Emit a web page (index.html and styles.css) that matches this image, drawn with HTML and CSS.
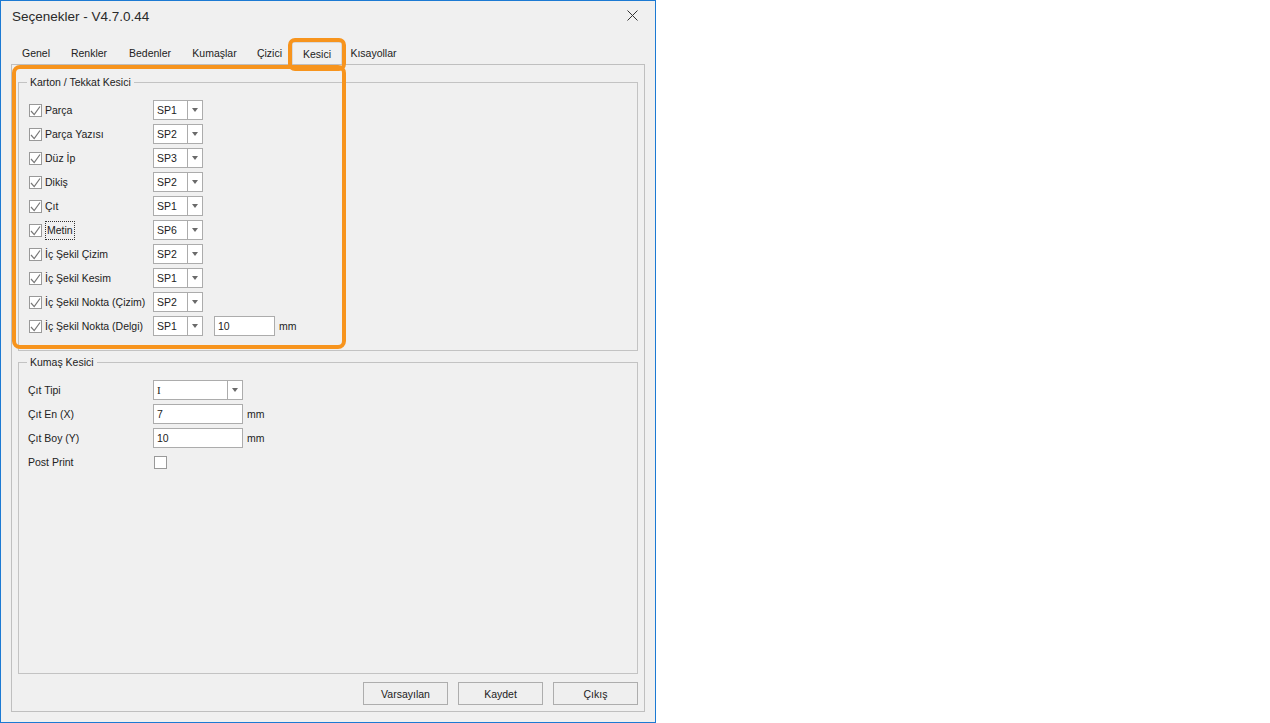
FILE: index.html
```html
<!DOCTYPE html>
<html lang="tr">
<head>
  <meta charset="UTF-8">
  <title>Seçenekler</title>
  <link rel="stylesheet" href="styles.css">
</head>
<body>

<div class="window">
  <div class="titlebar">
    <span class="title">Seçenekler - V4.7.0.44</span>
    <svg class="close" width="11" height="11" viewBox="0 0 11 11"><path d="M0.5 0.5L10.5 10.5M10.5 0.5L0.5 10.5" stroke="#333" stroke-width="1"/></svg>
  </div>

  <div class="tabs">
    <div class="tab tab-genel">Genel</div>
    <div class="tab tab-renkler">Renkler</div>
    <div class="tab tab-bedenler">Bedenler</div>
    <div class="tab tab-kumaslar">Kumaşlar</div>
    <div class="tab tab-cizici">Çizici</div>
    <div class="tab tab-kesici active">Kesici</div>
    <div class="tab tab-kisayollar">Kısayollar</div>
  </div>

  <div class="panel">
    <!-- Karton / Tekkat -->
    <div class="group group-karton">
      <div class="legend">Karton / Tekkat Kesici</div>
      <div class="rows rows-karton">
        <div class="row">
          <span class="cb"><svg viewBox="0 0 11 11"><path d="M1 6L4.2 9.6L10 1.5"/></svg></span>
          <span class="lbl">Parça</span>
          <div class="combo"><span class="val">SP1</span><span class="arrow"></span></div>
        </div>
        <div class="row">
          <span class="cb"><svg viewBox="0 0 11 11"><path d="M1 6L4.2 9.6L10 1.5"/></svg></span>
          <span class="lbl">Parça Yazısı</span>
          <div class="combo"><span class="val">SP2</span><span class="arrow"></span></div>
        </div>
        <div class="row">
          <span class="cb"><svg viewBox="0 0 11 11"><path d="M1 6L4.2 9.6L10 1.5"/></svg></span>
          <span class="lbl">Düz İp</span>
          <div class="combo"><span class="val">SP3</span><span class="arrow"></span></div>
        </div>
        <div class="row">
          <span class="cb"><svg viewBox="0 0 11 11"><path d="M1 6L4.2 9.6L10 1.5"/></svg></span>
          <span class="lbl">Dikiş</span>
          <div class="combo"><span class="val">SP2</span><span class="arrow"></span></div>
        </div>
        <div class="row">
          <span class="cb"><svg viewBox="0 0 11 11"><path d="M1 6L4.2 9.6L10 1.5"/></svg></span>
          <span class="lbl">Çıt</span>
          <div class="combo"><span class="val">SP1</span><span class="arrow"></span></div>
        </div>
        <div class="row">
          <span class="cb"><svg viewBox="0 0 11 11"><path d="M1 6L4.2 9.6L10 1.5"/></svg></span>
          <span class="lbl"><span class="focus">Metin</span></span>
          <div class="combo"><span class="val">SP6</span><span class="arrow"></span></div>
        </div>
        <div class="row">
          <span class="cb"><svg viewBox="0 0 11 11"><path d="M1 6L4.2 9.6L10 1.5"/></svg></span>
          <span class="lbl">İç Şekil Çizim</span>
          <div class="combo"><span class="val">SP2</span><span class="arrow"></span></div>
        </div>
        <div class="row">
          <span class="cb"><svg viewBox="0 0 11 11"><path d="M1 6L4.2 9.6L10 1.5"/></svg></span>
          <span class="lbl">İç Şekil Kesim</span>
          <div class="combo"><span class="val">SP1</span><span class="arrow"></span></div>
        </div>
        <div class="row">
          <span class="cb"><svg viewBox="0 0 11 11"><path d="M1 6L4.2 9.6L10 1.5"/></svg></span>
          <span class="lbl">İç Şekil Nokta (Çizim)</span>
          <div class="combo"><span class="val">SP2</span><span class="arrow"></span></div>
        </div>
        <div class="row">
          <span class="cb"><svg viewBox="0 0 11 11"><path d="M1 6L4.2 9.6L10 1.5"/></svg></span>
          <span class="lbl">İç Şekil Nokta (Delgi)</span>
          <div class="combo"><span class="val">SP1</span><span class="arrow"></span></div>
          <div class="field field-short">10</div>
          <span class="unit">mm</span>
        </div>
      </div>
    </div>

    <!-- Kumaş -->
    <div class="group group-kumas">
      <div class="legend">Kumaş Kesici</div>
      <div class="rows rows-kumas">
        <div class="row">
          <span class="lbl2">Çıt Tipi</span>
          <div class="combo combo-wide"><span class="val val-serif">I</span><span class="arrow"></span></div>
        </div>
        <div class="row">
          <span class="lbl2">Çıt En (X)</span>
          <div class="field field-wide">7</div>
          <span class="unit">mm</span>
        </div>
        <div class="row">
          <span class="lbl2">Çıt Boy (Y)</span>
          <div class="field field-wide">10</div>
          <span class="unit">mm</span>
        </div>
        <div class="row">
          <span class="lbl2">Post Print</span>
          <span class="cb cb-empty"></span>
        </div>
      </div>
    </div>

    <div class="buttons">
      <button class="btn">Varsayılan</button>
      <button class="btn">Kaydet</button>
      <button class="btn">Çıkış</button>
    </div>
  </div>

  <!-- orange highlight drawn over the dialog -->
  <svg class="highlight" width="656" height="723" viewBox="0 0 656 723">
    <rect x="290" y="40" width="54" height="29" rx="5" />
    <rect x="14" y="67" width="330" height="280" rx="6" />
  </svg>
</div>

</body>
</html>
```

FILE: styles.css
```css
* {
  box-sizing: border-box;
}

body {
  margin: 0;
  background: #fff;
  font-family: "Liberation Sans", Arial, sans-serif;
  font-size: 10.5px;
  color: #222;
}

.window {
  position: relative;
  width: 656px;
  height: 723px;
  border: 1px solid #1c7ad3;
  background: #f0f0f0;
}

.titlebar {
  height: 41px;
  display: flex;
  justify-content: space-between;
  align-items: flex-start;
  padding: 6px 17px 0 11px;
}

.title {
  font-size: 13.5px;
  line-height: 20px;
  color: #2a2a2a;
}

.close {
  margin-top: 3px;
}

.tabs {
  display: flex;
  height: 22px;
  padding-left: 11px;
}

.tab {
  padding-top: 1px;
  line-height: 21px;
  text-align: center;
}

.tab-genel { width: 48px; }
.tab-renkler { width: 58px; }
.tab-bedenler { width: 64px; }
.tab-kumaslar { width: 65px; }
.tab-cizici { width: 45px; }
.tab-kesici { width: 50px; }
.tab-kisayollar { width: 63px; }

.tab.active {
  border: 1px solid #d9d9d9;
  border-bottom: none;
  padding-top: 1px;
  line-height: 20px;
}

.panel {
  margin-left: 10px;
  width: 634px;
  height: 648px;
  border: 1px solid #bfbfbf;
  padding: 17px 6px 0 6px;
}

.group {
  border: 1px solid #c3c3c3;
}

.group-karton {
  height: 269px;
}

.group-kumas {
  height: 312px;
  margin-top: 11px;
}

.legend {
  display: table;
  margin: -7px 0 0 8px;
  padding: 0 3px;
  line-height: 13px;
  background: #f0f0f0;
}

.rows {
  padding-top: 9px;
}

.rows-karton {
  padding-left: 10px;
}

.rows-kumas {
  padding-left: 9px;
}

.row {
  display: flex;
  align-items: center;
  height: 24px;
}

.cb {
  width: 13px;
  height: 13px;
  border: 1px solid #999;
  background: #fff;
  margin-right: 3px;
}

.cb svg {
  display: block;
  width: 11px;
  height: 11px;
  fill: none;
  stroke: #777;
  stroke-width: 1.2;
}

.cb-empty {
  margin-left: 1px;
}

.lbl {
  width: 108px;
  line-height: 13px;
}

.lbl2 {
  width: 125px;
  line-height: 13px;
}

.focus {
  display: inline-block;
  border: 1px dotted #333;
  padding: 2px 1px;
}

.combo {
  width: 50px;
  height: 20px;
  border: 1px solid #acacac;
  background: #fff;
  display: flex;
}

.combo-wide {
  width: 90px;
}

.combo .val {
  flex: 1;
  padding-left: 3px;
  line-height: 18px;
}

.combo .val-serif {
  font-family: "Liberation Serif", serif;
  font-size: 11px;
}

.combo .arrow {
  width: 15px;
  border-left: 1px solid #acacac;
  display: flex;
  align-items: center;
  justify-content: center;
}

.combo .arrow::after {
  content: "";
  border-left: 3.5px solid transparent;
  border-right: 3.5px solid transparent;
  border-top: 4px solid #6a6a6a;
}

.field {
  height: 20px;
  border: 1px solid #acacac;
  background: #fff;
  padding-left: 3px;
  line-height: 18px;
}

.field-short {
  width: 61px;
  margin-left: 11px;
}

.field-wide {
  width: 90px;
}

.unit {
  margin-left: 4px;
}

.buttons {
  margin-top: 8px;
  display: flex;
  justify-content: flex-end;
  gap: 10px;
}

.btn {
  width: 85px;
  height: 23px;
  border: 1px solid #adadad;
  background: #efefef;
  font-family: inherit;
  font-size: 10.5px;
  color: #222;
  padding: 0;
}

.highlight {
  position: absolute;
  left: -1px;
  top: -1px;
  pointer-events: none;
}

.highlight rect {
  fill: none;
  stroke: #f7941d;
  stroke-width: 4;
}
```
